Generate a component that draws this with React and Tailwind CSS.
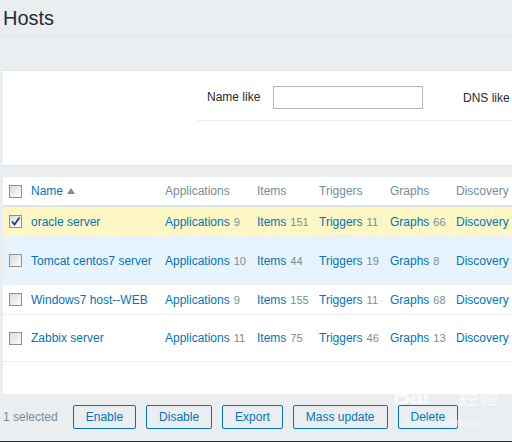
import React from "react";

function Box({ checked }) {
  return (
    <div className="relative w-[13px] h-[13px] border border-[#8e8f8f] bg-gradient-to-br from-[#dcdcdc] to-[#fbfbfb]">
      {checked && (
        <svg viewBox="0 0 13 13" className="absolute -left-px -top-px w-[13px] h-[13px]">
          <path d="M3 6.5 L5.5 9.5 L10.5 2.5" fill="none" stroke="#2a3d7a" strokeWidth="1.8" />
        </svg>
      )}
    </div>
  );
}

const rows = [
  { name: "oracle server", app: 9, items: 151, trig: 11, graphs: 66, bg: "bg-[#fcf7c4]", h: "h-[30px]", checked: true },
  { name: "Tomcat centos7 server", app: 10, items: 44, trig: 19, graphs: 8, bg: "bg-[#e8f4fd]", h: "h-[48px]" },
  { name: "Windows7 host--WEB", app: 9, items: 155, trig: 11, graphs: 68, bg: "bg-white", h: "h-[30px]" },
  { name: "Zabbix server", app: 11, items: 75, trig: 46, graphs: 13, bg: "bg-white", h: "h-[47px]" },
];

const cols = "grid grid-cols-[28px_134px_92px_62px_71px_66px_140px] items-center";

function Link({ label, n }) {
  return (
    <span className="whitespace-nowrap">
      <span className="text-[#0275b8]">{label}</span>
      {n !== undefined && <span className="text-[11px] text-[#768d99] ml-[4px]">{n}</span>}
    </span>
  );
}

export default function App() {
  return (
    <div className="relative w-[512px] h-[442px] overflow-hidden bg-[#ebeef0] text-[12px] text-[#1f2c33]" style={{ fontFamily: '"Liberation Sans", Arial, sans-serif' }}>
      <div className="pt-[6px] pb-[6px] pl-[3px] border-b border-[#dfe4e7]">
        <h1 className="text-[20px] leading-[24px] text-[#1f2c33]">Hosts</h1>
      </div>

      <div className="ml-[3px] mt-[33px] w-[620px] bg-white border-y border-[#dfe4e7] h-[96px]">
        <div className="ml-[194px] flex items-center pl-[10px] pt-[15px] pb-[11px] border-b border-[#ebeef0]">
          <span className="w-[66px] leading-[23px]">Name like</span>
          <div className="w-[150px] h-[23px] border border-[#acbbc2] bg-white" />
          <span className="ml-[40px]">DNS like</span>
        </div>
      </div>

      <div className="ml-[3px] mt-[11px] w-[620px] bg-white h-[217px]">
        <div className={`${cols} h-[30px] border-b-2 border-[#dfe4e7] text-[#768d99]`}>
          <div className="pl-[6px]"><Box /></div>
          <div className="flex items-center text-[#0275b8]">
            Name
            <svg viewBox="0 0 8 6" className="w-[8px] h-[6px] ml-[4px]"><path d="M0 6 L4 0 L8 6 Z" fill="#768d99" /></svg>
          </div>
          <div>Applications</div>
          <div>Items</div>
          <div>Triggers</div>
          <div>Graphs</div>
          <div>Discovery</div>
        </div>
        {rows.map((r) => (
          <div key={r.name} className={`${cols} ${r.h} ${r.bg} border-b border-[#ebeef0]`}>
            <div className="pl-[6px]"><Box checked={r.checked} /></div>
            <div className="text-[#0275b8] whitespace-nowrap">{r.name}</div>
            <Link label="Applications" n={r.app} />
            <Link label="Items" n={r.items} />
            <Link label="Triggers" n={r.trig} />
            <Link label="Graphs" n={r.graphs} />
            <Link label="Discovery" />
          </div>
        ))}
      </div>

      <div className="mt-[11px] ml-[3px] flex items-center gap-[10px]">
        <span className="text-[#768d99] mr-[5px]">1 selected</span>
        {["Enable", "Disable", "Export", "Mass update", "Delete"].map((b) => (
          <button key={b} className="h-[24px] px-[12px] border border-[#0275b8] rounded-[2px] text-[#0275b8] text-[12px] leading-[22px]">
            {b}
          </button>
        ))}
      </div>

      <div className="absolute left-0 right-0 bottom-0 h-[1px] bg-[#2a2f33]" />

      <div className="absolute left-[393px] top-[383px] text-white/70 pointer-events-none">
        <div className="flex items-end">
          <span className="text-[24px] font-bold leading-[26px] tracking-tight">Bai</span>
          <span className="text-[20px] leading-[24px] ml-[30px]" style={{ fontFamily: '"Noto Sans CJK SC", sans-serif' }}>经验</span>
        </div>
        <div className="text-[10px] leading-[12px] mt-[8px] ml-[10px] text-white/60">jingyan.baidu.com</div>
      </div>
    </div>
  );
}
